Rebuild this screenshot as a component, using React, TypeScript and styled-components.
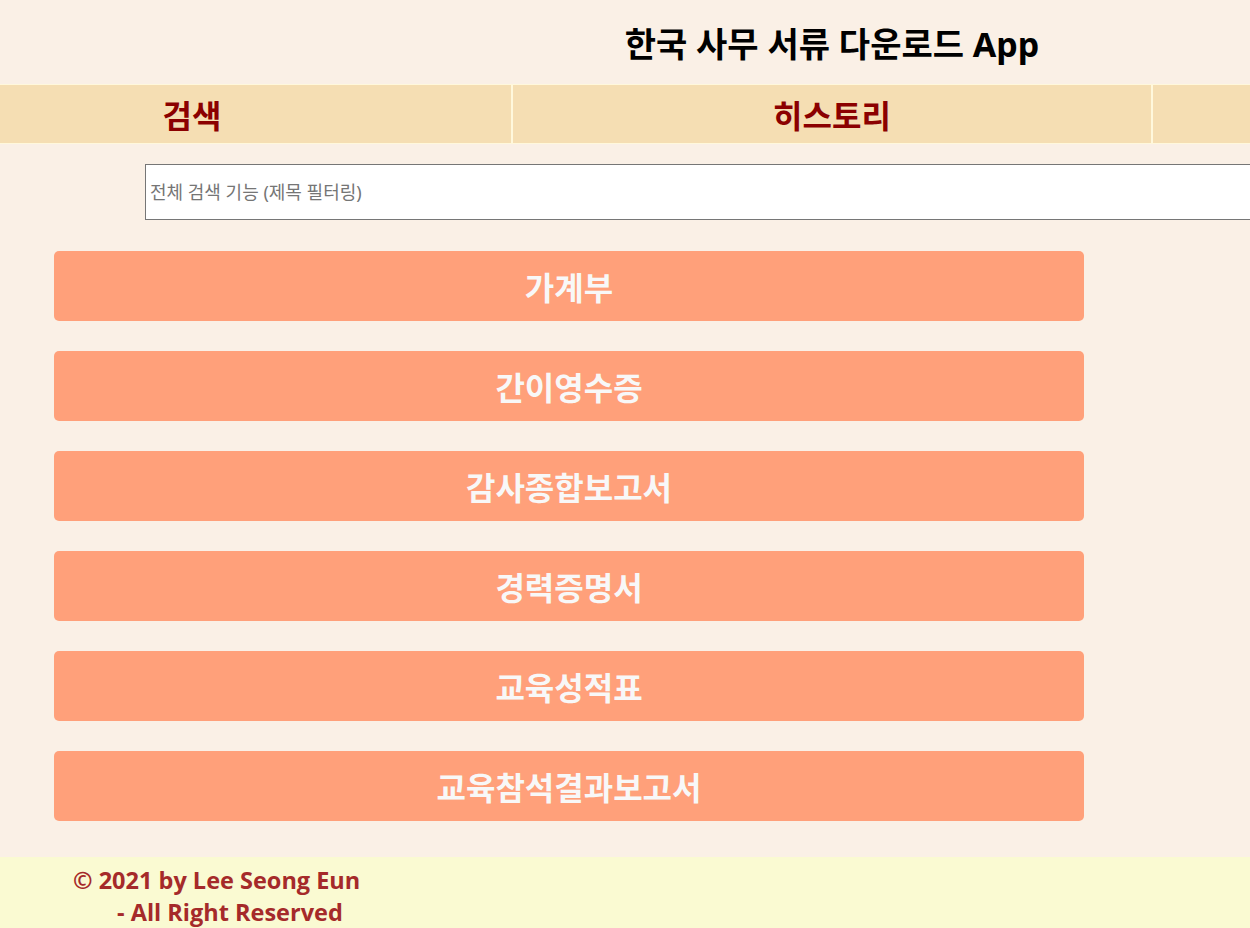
import styled, { createGlobalStyle } from 'styled-components';

const GlobalStyle = createGlobalStyle`
  html, body {
    margin: 0;
    padding: 0;
    overflow-x: hidden;
    background: #faf0e6;
    font-family: "Noto Sans", "Noto Sans CJK KR", sans-serif;
  }
`;

const Page = styled.div`
  width: 100%;
  overflow: hidden;
  background: #faf0e6;
`;

const Header = styled.header`
  height: 84px;
  display: flex;
  align-items: center;
  justify-content: center;
  padding-left: 414px;
`;

const Title = styled.h1`
  margin: 0;
  font-size: 34px;
  font-weight: 700;
  color: #000;
  white-space: nowrap;
  font-family: "Noto Sans", "Noto Sans CJK KR", sans-serif;
`;

const TabBar = styled.nav`
  display: flex;
  height: 58px;
  border-top: 1px solid #fff8dc;
  border-bottom: 1px solid #fff8dc;
  background: #f5deb3;
`;

const Tab = styled.div<{ $width?: number; $shift?: number }>`
  flex: ${(p) => (p.$width ? `0 0 ${p.$width}px` : '1 0 300px')};
  display: flex;
  align-items: center;
  justify-content: center;
  padding-right: ${(p) => p.$shift ?? 0}px;
  box-sizing: border-box;
  border-right: 2px solid #fff8dc;
  font-size: 32px;
  font-weight: 700;
  color: #8b0000;
  cursor: pointer;
`;

const SearchRow = styled.div`
  padding: 20px 0 0 145px;
  height: 56px;
`;

const SearchInput = styled.input`
  width: 1300px;
  height: 56px;
  box-sizing: border-box;
  border: 1px solid #767676;
  background: #fff;
  padding: 0 4px;
  font-size: 18px;
  font-family: "Noto Sans", "Noto Sans CJK KR", sans-serif;
  &::placeholder {
    color: #757575;
  }
`;

const List = styled.div`
  display: flex;
  flex-direction: column;
  gap: 30px;
  padding: 31px 0 36px 54px;
`;

const DocButton = styled.div`
  width: 1030px;
  height: 70px;
  display: flex;
  align-items: center;
  justify-content: center;
  background: #ffa07a;
  border-radius: 5px;
  color: #f8f8f8;
  font-size: 32px;
  font-weight: 700;
  cursor: pointer;
`;

const Footer = styled.footer`
  background: #fafad2;
  padding: 7px 0 20px 73px;
  color: #a52a2a;
  font-family: "Open Sans", "Noto Sans", sans-serif;
  font-size: 23.5px;
  font-weight: 700;
  line-height: 32px;
`;

const FooterLine = styled.div<{ $indent?: number }>`
  padding-left: ${(p) => p.$indent ?? 0}px;
`;

const docs = ['가계부', '간이영수증', '감사종합보고서', '경력증명서', '교육성적표', '교육참석결과보고서'];

export default function App() {
  return (
    <Page>
      <GlobalStyle />
      <Header>
        <Title>한국 사무 서류 다운로드 App</Title>
      </Header>
      <TabBar>
        <Tab $width={513} $shift={127}>검색</Tab>
        <Tab $width={640}>히스토리</Tab>
        <Tab />
      </TabBar>
      <SearchRow>
        <SearchInput placeholder="전체 검색 기능 (제목 필터링)" />
      </SearchRow>
      <List>
        {docs.map((d) => (
          <DocButton key={d}>{d}</DocButton>
        ))}
      </List>
      <Footer>
        <FooterLine>© 2021 by Lee Seong Eun</FooterLine>
        <FooterLine $indent={44}>- All Right Reserved</FooterLine>
      </Footer>
    </Page>
  );
}
